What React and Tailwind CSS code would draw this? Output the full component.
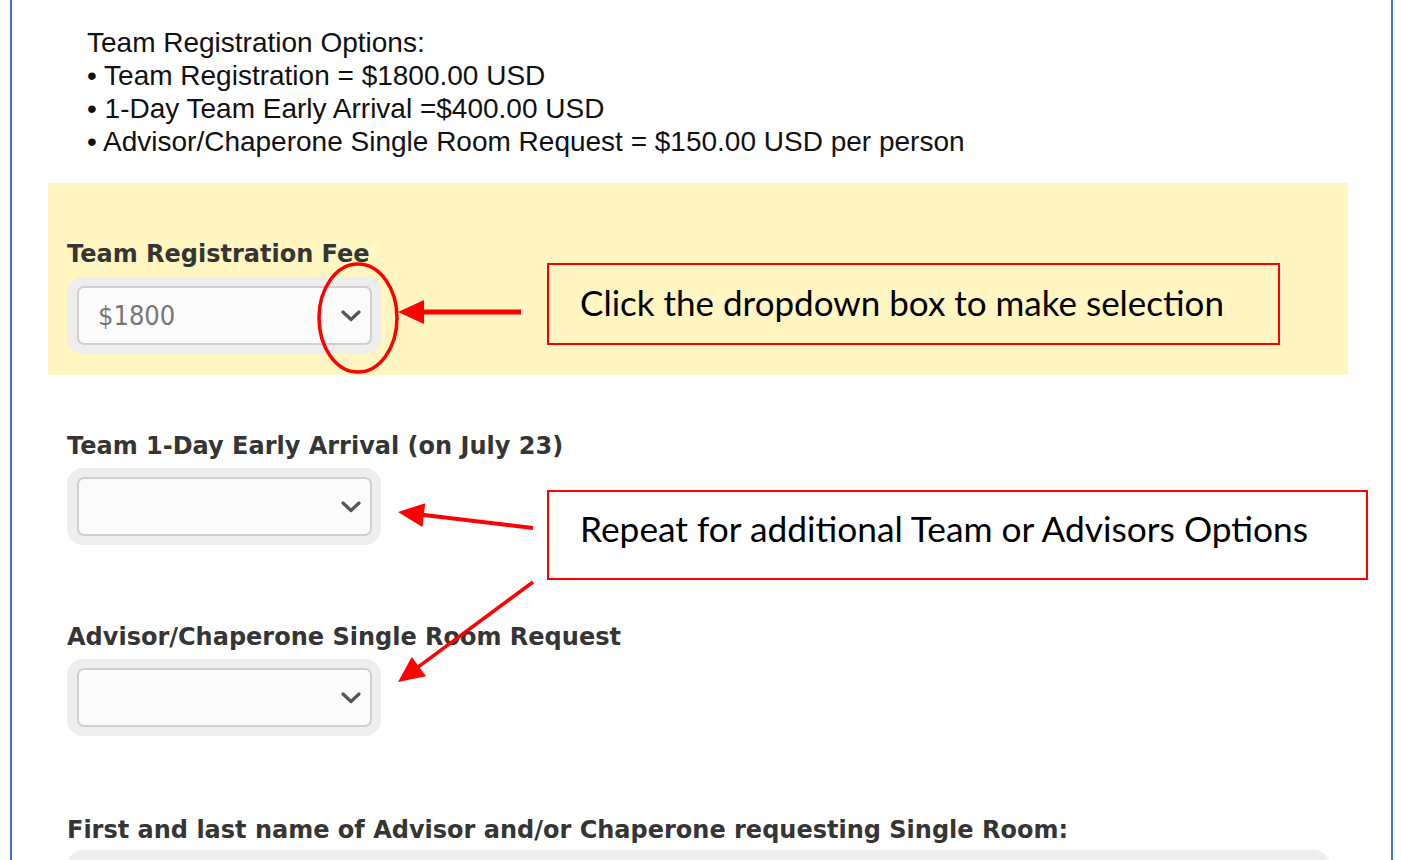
import React from "react";

function Chevron() {
  return (
    <svg width="20" height="12" viewBox="0 0 20 12" className="shrink-0">
      <path d="M2 2 L10 9.5 L18 2" fill="none" stroke="#555" strokeWidth="3.2" strokeLinecap="round" strokeLinejoin="round" />
    </svg>
  );
}

function SelectBox({ value }) {
  return (
    <div className="w-[314px] h-[77px] rounded-[16px] bg-[#eeeeee] p-[9px] pl-[10px]">
      <div className="h-full w-full rounded-[7px] border-2 border-[#cfcfcf] bg-[#fbfbfb] flex items-center justify-between pl-[19px] pr-[9px]">
        <span className="text-[27px] leading-none text-[#777] font-['DejaVu_Sans_Condensed','Liberation_Sans',sans-serif]">{value}</span>
        <Chevron />
      </div>
    </div>
  );
}

function Label({ children }) {
  return (
    <div className="h-[28px] leading-[28px] text-[24px] font-bold text-[#353535] font-['DejaVu_Sans',sans-serif] whitespace-nowrap">
      {children}
    </div>
  );
}

function arrowParts(x1, y1, x2, y2, len = 26, half = 12) {
  const dx = x2 - x1;
  const dy = y2 - y1;
  const d = Math.hypot(dx, dy);
  const ux = dx / d;
  const uy = dy / d;
  const bx = x2 - ux * len;
  const by = y2 - uy * len;
  const px = -uy;
  const py = ux;
  const pts = `${x2},${y2} ${bx + px * half},${by + py * half} ${bx - px * half},${by - py * half}`;
  return { bx: bx + ux * 2, by: by + uy * 2, pts };
}

function Arrow({ x1, y1, x2, y2, w = 5 }) {
  const a = arrowParts(x1, y1, x2, y2);
  return (
    <g>
      <line x1={x1} y1={y1} x2={a.bx} y2={a.by} stroke="#ff0000" strokeWidth={w} />
      <polygon points={a.pts} fill="#ff0000" />
    </g>
  );
}

export default function App() {
  return (
    <div className="w-[1401px] h-[860px] bg-white overflow-hidden">
      <div className="relative ml-[10px] w-[1383px] h-[860px] border-x-2 border-[#4472c4] overflow-hidden">
        <div className="pl-[75px] pt-[26px] text-[28px] leading-[33px] text-[#111] font-['Liberation_Sans',sans-serif]">
          <div>Team Registration Options:</div>
          <div>• Team Registration = $1800.00 USD</div>
          <div>• 1-Day Team Early Arrival =$400.00 USD</div>
          <div>• Advisor/Chaperone Single Room Request = $150.00 USD per person</div>
        </div>

        <div className="ml-[36px] mt-[25px] w-[1300px] bg-[#fff6c1] pl-[19px] pt-[57px] pb-[21px]">
          <Label>Team Registration Fee</Label>
          <div className="mt-[9px]">
            <SelectBox value="$1800" />
          </div>
        </div>

        <div className="pl-[55px]">
          <div className="mt-[57px]">
            <Label>Team 1-Day Early Arrival (on July 23)</Label>
            <div className="mt-[8px]">
              <SelectBox value="" />
            </div>
          </div>
          <div className="mt-[78px]">
            <Label>Advisor/Chaperone Single Room Request</Label>
            <div className="mt-[8px]">
              <SelectBox value="" />
            </div>
          </div>
          <div className="mt-[80px]">
            <Label>First and last name of Advisor and/or Chaperone requesting Single Room:</Label>
            <div className="mt-[6px] w-[1263px] h-[77px] rounded-[16px] bg-[#eeeeee]" />
          </div>
        </div>

        <div className="absolute left-[535px] top-[263px] w-[733px] h-[82px] border-2 border-[#ff0000] flex items-center pl-[31px] pb-[4px] text-[35px] text-black font-['Lato',sans-serif] whitespace-nowrap">
          Click the dropdown box to make selection
        </div>
        <div className="absolute left-[535px] top-[490px] w-[821px] h-[90px] border-2 border-[#ff0000] flex items-center pl-[31px] pb-[12px] text-[35.3px] text-black font-['Lato',sans-serif] whitespace-nowrap">
          Repeat for additional Team or Advisors Options
        </div>

        <svg className="absolute left-0 top-0 pointer-events-none" width="1379" height="860">
          <g transform="translate(-12 0)">
            <ellipse cx="358" cy="318" rx="39" ry="54" fill="none" stroke="#ff0000" strokeWidth="3.5" />
            <Arrow x1={521} y1={312} x2={398} y2={312} w={5} />
            <Arrow x1={533} y1={528} x2={398} y2={512} w={4} />
            <Arrow x1={533} y1={582} x2={398} y2={682} w={3.5} />
          </g>
        </svg>
      </div>
    </div>
  );
}
